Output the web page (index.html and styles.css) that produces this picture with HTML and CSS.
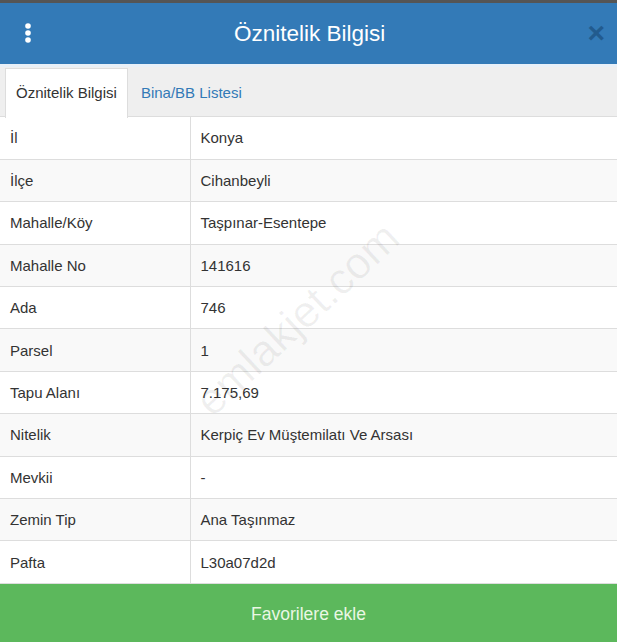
FILE: index.html
```html
<!DOCTYPE html>
<html lang="tr">
<head>
  <meta charset="UTF-8">
  <title>Öznitelik Bilgisi</title>
  <link rel="stylesheet" href="styles.css">
</head>
<body>
  <div class="topstrip"></div>
  <div class="modal">
    <div class="modal-header">
      <span class="menu">
        <svg width="10" height="20" viewBox="0 0 10 20"><circle cx="5" cy="3" r="2.8" fill="#fff"/><circle cx="5" cy="10" r="2.8" fill="#fff"/><circle cx="5" cy="17" r="2.8" fill="#fff"/></svg>
      </span>
      <h1 class="title">Öznitelik Bilgisi</h1>
      <span class="close">×</span>
    </div>
    <div class="tabs">
      <div class="tab active">Öznitelik Bilgisi</div>
      <div class="tab">Bina/BB Listesi</div>
    </div>
    <div class="content">
      <table class="info">
        <tr><td>İl</td><td>Konya</td></tr>
        <tr><td>İlçe</td><td>Cihanbeyli</td></tr>
        <tr><td>Mahalle/Köy</td><td>Taşpınar-Esentepe</td></tr>
        <tr><td>Mahalle No</td><td>141616</td></tr>
        <tr><td>Ada</td><td>746</td></tr>
        <tr><td>Parsel</td><td>1</td></tr>
        <tr><td>Tapu Alanı</td><td>7.175,69</td></tr>
        <tr><td>Nitelik</td><td>Kerpiç Ev Müştemilatı Ve Arsası</td></tr>
        <tr><td>Mevkii</td><td>-</td></tr>
        <tr><td>Zemin Tip</td><td>Ana Taşınmaz</td></tr>
        <tr><td>Pafta</td><td>L30a07d2d</td></tr>
      </table>
      <div class="watermark">emlakjet.com</div>
    </div>
    <button class="fav">Favorilere ekle</button>
  </div>
</body>
</html>
```

FILE: styles.css
```css
body {
  margin: 0;
  font-family: "Liberation Sans", Arial, sans-serif;
  font-size: 15px;
  color: #333;
  background: #fff;
}
.topstrip { height: 3px; background: #555; }
.modal-header {
  height: 61px;
  background: #337ab7;
  display: flex;
  align-items: center;
  justify-content: space-between;
  padding: 0 12px 0 23px;
  border-bottom: 3px solid #e8f0f8;
}
.menu { display: flex; width: 10px; margin-top: -1px; }
.title {
  margin: 0;
  font-size: 22.5px;
  font-weight: normal;
  color: #fff;
  padding-right: 1px;
}
.close {
  font-size: 30px;
  font-weight: bold;
  color: #1f5485;
  opacity: 0.8;
  line-height: 1;
  margin-top: -2px;
}
.tabs {
  display: flex;
  background: #efefef;
  padding: 1px 0 0 5px;
  border-bottom: 1px solid #ddd;
  height: 48px;
}
.tab {
  padding: 0 10px;
  margin-right: 2px;
  line-height: 48px;
  color: #337ab7;
  border: 1px solid transparent;
  border-bottom: none;
  margin-bottom: -1px;
}
.tab.active {
  background: #fff;
  color: #333;
  border-color: #ddd;
  height: 49px;
}
.content { position: relative; overflow: hidden; }
.info {
  width: 100%;
  border-collapse: collapse;
}
.info td {
  height: 42.4px;
  padding: 0 10px;
  border-top: 1px solid #ddd;
  box-sizing: border-box;
}
.info tr:first-child td { border-top: none; }
.info td:first-child { width: 190px; border-right: 1px solid #ddd; box-sizing: border-box; }
.info tr:nth-child(even) td { background: #f9f9f9; }
.watermark {
  position: absolute;
  left: 297px;
  top: 202px;
  transform: translate(-50%, -50%) rotate(-43deg);
  font-size: 44px;
  color: rgba(0, 0, 0, 0.06);
  white-space: nowrap;
  pointer-events: none;
}
.fav {
  display: block;
  width: 100%;
  height: 59px;
  border: none;
  background: #5cb85c;
  color: #eaf7e4;
  font-family: "Liberation Sans", Arial, sans-serif;
  font-size: 17.5px;
  padding-top: 3px;
  border-top: 1px solid #ddd;
}
```
